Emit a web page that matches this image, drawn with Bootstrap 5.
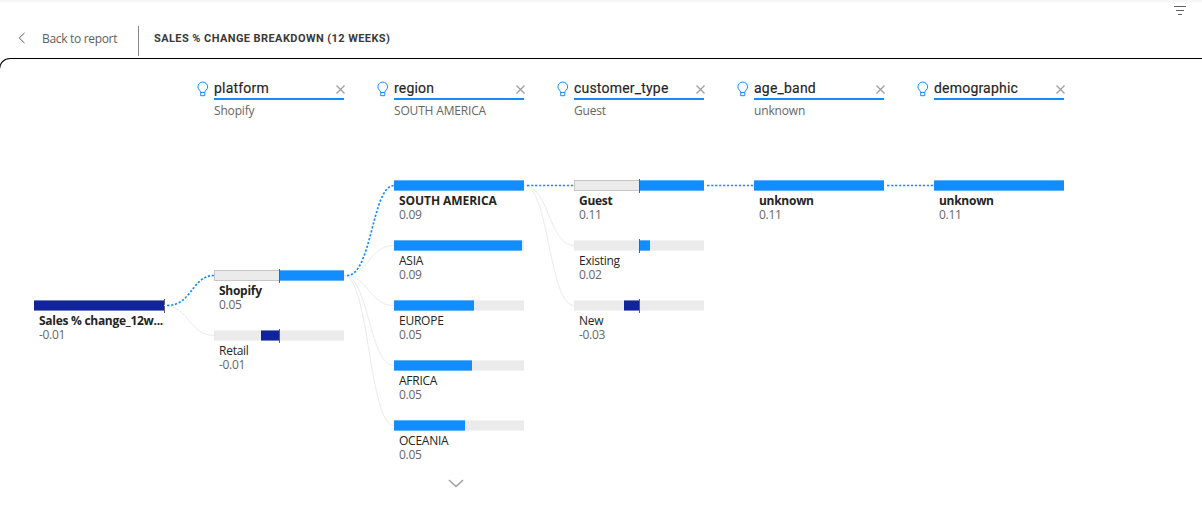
<!DOCTYPE html>
<html lang="en">
<head>
<meta charset="utf-8">
<meta name="viewport" content="width=device-width, initial-scale=1">
<title>Sales % change breakdown</title>
<link href="https://cdn.jsdelivr.net/npm/bootstrap@5.3.0/dist/css/bootstrap.min.css" rel="stylesheet">
<style>
  body { height: 515px; background: #fff; color: #252423; font: 12px/14px "Open Sans", "Noto Sans", sans-serif; }
  svg { display: block; flex: none; }
  .topbar { height: 58px; border-top: 2px solid #f6f6f6; padding: 1px 14px 0 18px; }
  .crumbs { padding-top: 23px; }
  .back { color: #605e5c; letter-spacing: -.32px; gap: 16px; width: 120px; padding-top: 6px; }
  .rule { width: 1px; height: 30px; background: #8a8886; }
  .page-title { font: 700 11px/14px Roboto, sans-serif; color: #3b3a39; letter-spacing: .42px; margin-left: 15px; padding-top: 6px; }
  .panel { height: 457px; margin-left: -1px; border: solid #000; border-width: 1px 0 0 1px; border-top-left-radius: 11px; padding-left: 34px; }
  .tree { gap: 50px; }
  .level { width: 130px; }
  .field { height: 121px; padding-top: 20px; }
  .field-name { height: 21px; border-bottom: 2px solid #118dff; font: 400 14px/19px Roboto, sans-serif; letter-spacing: .2px; -webkit-text-stroke: .15px; }
  .bulb { margin-left: -17px; margin-right: 5px; }
  .cross { margin: 2px -1px 0 0; }
  .picked { color: #666; margin-top: 4px; letter-spacing: -.17px; }
  .node { height: 60px; }
  .track { height: 11px; background: #ebebeb; border: solid #f3f3f3; border-width: 1px 0; }
  .track.chosen { border: 1px solid #c8c6c4; }
  .fill { top: -1px; bottom: -1px; background: #118dff; border: 1px solid #64b2fb; border-width: 1px 0; }
  .fill.neg { background: #12239e; border-color: #7780c5; }
  .axis { top: -2px; width: 1px; height: 14px; background: #605e5c; }
  .label { margin: 3px 0 0 5px; letter-spacing: -.25px; }
  .label.fw-bold { letter-spacing: -.28px; }
  .label.caps.fw-bold { letter-spacing: -.07px; }
  .value { margin-left: 5px; color: #666; letter-spacing: -.3px; }
  .more { margin: -1px 0 0 54px; }
  .links { left: 0; top: 0; fill: none; stroke: #ebebeb; }
  .links .active { stroke: #118dff; stroke-width: 1.7; stroke-dasharray: 2.2 1.8; }
</style>
</head>
<body class="overflow-hidden position-relative">
<header class="topbar d-flex justify-content-between align-items-start">
  <div class="crumbs d-flex">
    <div class="back d-flex">
      <svg width="8" height="14" viewBox="0 0 8 14" fill="none" stroke="#605e5c"><path d="M6.500 1 1.200 6l5.300 5"/></svg>
      <span class="text-nowrap">Back to report</span>
    </div>
    <div class="rule"></div>
    <div class="page-title text-nowrap">SALES % CHANGE BREAKDOWN (12 WEEKS)</div>
  </div>
  <svg width="16" height="14" viewBox="0 0 16 14" stroke="#605e5c"><path d="M2 3.500h12M4 7.500h8M6 11.500h4"/></svg>
</header>
<main class="panel">
  <div class="tree d-flex" id="tree"></div>
</main>
<svg class="links position-absolute" width="1202" height="515" id="links"></svg>
<script src="https://cdn.jsdelivr.net/npm/bootstrap@5.3.0/dist/js/bootstrap.bundle.min.js"></script>
<script>
// node: [label, value, fill start, fill width, axis position or null, on the selected path]
const levels = [
  {top: 120, nodes: [['Sales % change_12w...', '-0.01', 0, 130, 130, true]]},
  {name: 'platform', pick: 'Shopify', top: 90, nodes: [['Shopify', '0.05', 65, 65, 65, true], ['Retail', '-0.01', 47, 18, 65, false]]},
  {name: 'region', pick: 'SOUTH AMERICA', top: 0, nodes: [['SOUTH AMERICA', '0.09', 0, 130, null, true], ['ASIA', '0.09', 0, 127.5, null, false], ['EUROPE', '0.05', 0, 80, null, false], ['AFRICA', '0.05', 0, 77.7, null, false], ['OCEANIA', '0.05', 0, 71, null, false]], more: true},
  {name: 'customer_type', pick: 'Guest', top: 0, nodes: [['Guest', '0.11', 65, 65, 65, true], ['Existing', '0.02', 65, 11.3, 65, false], ['New', '-0.03', 50, 15, 65, false]]},
  {name: 'age_band', pick: 'unknown', top: 0, nodes: [['unknown', '0.11', 0, 130, null, true]]},
  {name: 'demographic', pick: '', top: 0, nodes: [['unknown', '0.11', 0, 130, null, true]]}
];
const bulb = '<svg class="bulb" width="12" height="16" viewBox="0 0 12 16" fill="none" stroke="#118dff"><path d="M3.700 11.500C3.700 9.400.9 8.700.9 5.900a4.850 4.850 0 0 1 9.700 0C10.600 8.700 7.800 9.400 7.800 11.500ZM3.700 11.500v3.200h4.100v-3.200"/></svg>';
const cross = '<svg class="cross ms-auto" width="9" height="9" viewBox="0 0 9 9" stroke="#a19f9d" stroke-width="1.300"><path d="M.5.5l8 8M8.500.5l-8 8"/></svg>';
const node = ([label, value, start, width, axis, on]) => `
  <div class="node">
    <div class="track position-relative ${on ? 'chosen' : ''}">
      <div class="fill position-absolute ${value[0] === '-' ? 'neg' : ''}" style="left:${start - (on ? 1 : 0)}px;width:${width}px"></div>
      ${axis === null ? '' : `<div class="axis position-absolute" style="left:${axis - (on ? 1 : 0)}px"></div>`}
    </div>
    <div class="label text-nowrap ${on ? 'fw-bold' : ''} ${label === label.toUpperCase() ? 'caps' : ''}">${label}</div>
    <div class="value">${value}</div>
  </div>`;
document.getElementById('tree').innerHTML = levels.map(l => `
  <section class="level">
    <div class="field">${l.name ? `
      <div class="field-name d-flex align-items-center"><div>${bulb}</div><span>${l.name}</span>${cross}</div>
      <div class="picked">${l.pick}</div>` : ''}
    </div>
    <div style="padding-top:${l.top}px">${l.nodes.map(node).join('')}</div>
    ${l.more ? '<svg class="more" width="16" height="9" viewBox="0 0 16 9" fill="none" stroke="#a19f9d" stroke-width="1.500"><path d="M1 1l7 6.500L15 1"/></svg>' : ''}
  </section>`).join('');

const curve = (x, y1, y2, on) => `<path class="${on ? 'active' : ''}" d="M${x} ${y1}C${x + 25} ${y1} ${x + 25} ${y2} ${x + 50} ${y2}"/>`;
let paths = '';
for (let i = 1; i < levels.length; i++) {
  const from = 185.5 + levels[i - 1].top;
  levels[i].nodes.forEach((n, k) => paths = curve((k === 0 ? 167 : 164) + 180 * (i - 1), from, 185.5 + levels[i].top + 60 * k, k === 0).replace(/ (\d+\.?\d*) (\d+\.?\d*)"/, (m, x, y) => ` ${k === 0 ? x - 3 : x} ${y}"`) + paths);
}
document.getElementById('links').innerHTML = paths;
</script>
</body>
</html>
